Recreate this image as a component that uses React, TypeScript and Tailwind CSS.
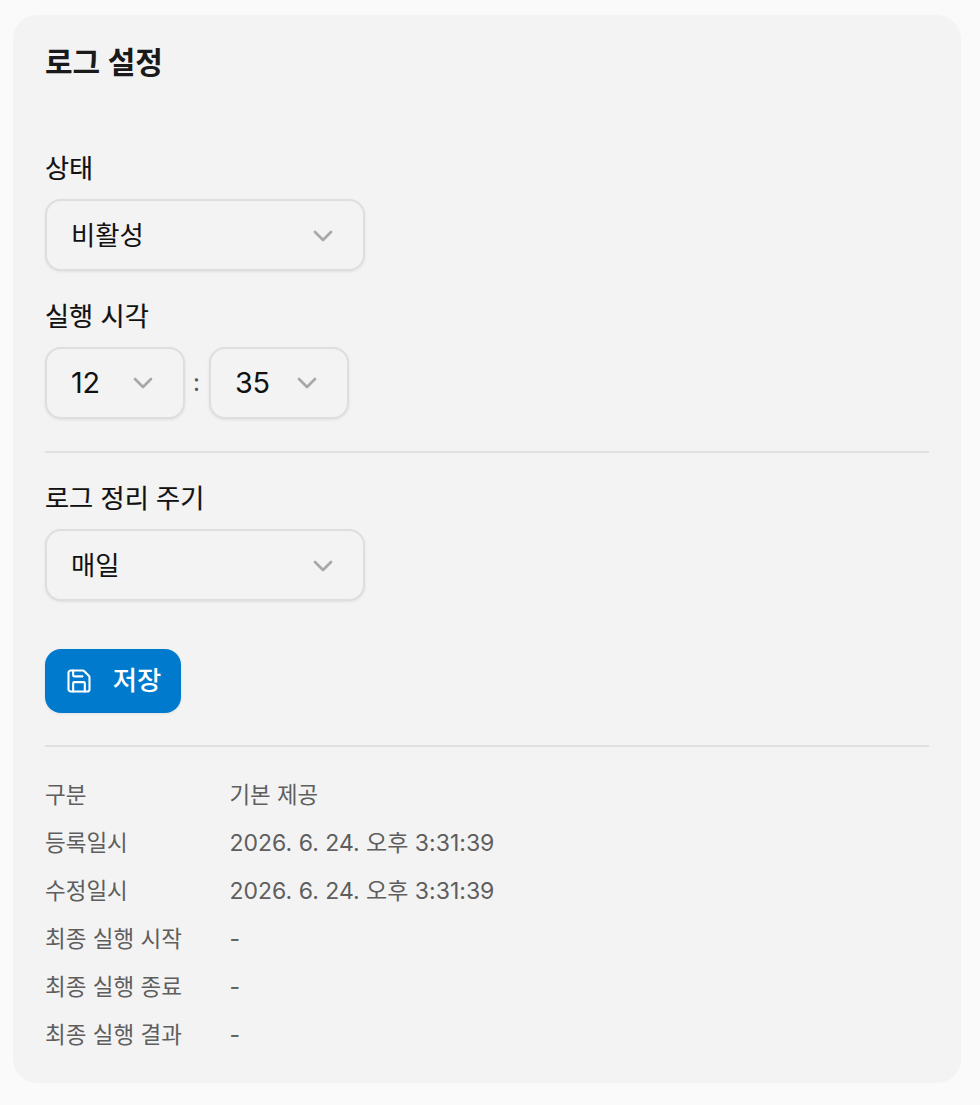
import React from 'react';
import { ChevronDown, Save } from 'lucide-react';

const info = [
  ['구분', '기본 제공'],
  ['등록일시', '2026. 6. 24. 오후 3:31:39'],
  ['수정일시', '2026. 6. 24. 오후 3:31:39'],
  ['최종 실행 시작', '-'],
  ['최종 실행 종료', '-'],
  ['최종 실행 결과', '-'],
];

function Select({ value, width, digits }: { value: string; width: string; digits?: boolean }) {
  return (
    <div className={`${width} h-[72px] flex items-center justify-between pl-[24px] pr-[24px] rounded-[16px] border-2 border-[#dedede] bg-[#f3f3f3] shadow-[0_1px_3px_rgba(0,0,0,0.08)] text-[#111] ${digits ? 'text-[28.8px] tracking-[-0.3px]' : 'text-[26.4px] pt-[1px]'}`}>
      <span>{value}</span>
      <ChevronDown size={32} strokeWidth={2} className="text-[#a8a8a8]" />
    </div>
  );
}

export default function App() {
  const label = "text-[26.2px] leading-[36px] font-normal text-[#111] [-webkit-text-stroke:0.2px_#111]";

  return (
    <div className="w-[980px] h-[1105px] bg-[#fafafa] pt-[15px] px-[13px] font-['Inter','Noto_Sans_CJK_KR',sans-serif]">
      <div className="w-[948px] h-[1068px] bg-[#f3f3f3] rounded-[24px] px-8 pt-[27px]">
        <h1 className="text-[30px] leading-[40px] font-semibold text-[#1a1a1a]">로그 설정</h1>

        <div className={`mt-[69px] ${label}`}>상태</div>
        <div className="mt-[12px]"><Select value="비활성" width="w-[320px]" /></div>

        <div className={`mt-[28px] ${label}`}>실행 시각</div>
        <div className="mt-[12px] flex items-center gap-2">
          <Select value="12" width="w-[140px]" digits />
          <span className="w-[8px] text-[24px] text-[#555]">:</span>
          <Select value="35" width="w-[140px]" digits />
        </div>

        <div className="mt-[32px] h-[2px] bg-[#e0e0e0]" />

        <div className={`mt-[28px] ${label}`}>로그 정리 주기</div>
        <div className="mt-[12px]"><Select value="매일" width="w-[320px]" /></div>

        <button className="mt-[48px] h-[64px] w-[136px] flex items-center justify-center gap-[20px] rounded-[16px] bg-[#007acc] text-white text-[26.4px] font-medium shadow-[0_1px_3px_rgba(0,0,0,0.08)]">
          <Save size={28} strokeWidth={1.8} />
          저장
        </button>

        <div className="mt-[32px] h-[2px] bg-[#e0e0e0]" />

        <div className="mt-[24px] flex flex-col">
          {info.map(([k, v]) => (
            <div key={k} className="flex h-[48px] items-center text-[23px] text-[#5e5e5e]">
              <div className="w-[184.5px] text-[22.5px]">{k}</div>
              <div className={k === '구분' ? 'text-[22.4px]' : ''}>{v}</div>
            </div>
          ))}
        </div>
      </div>
    </div>
  );
}
